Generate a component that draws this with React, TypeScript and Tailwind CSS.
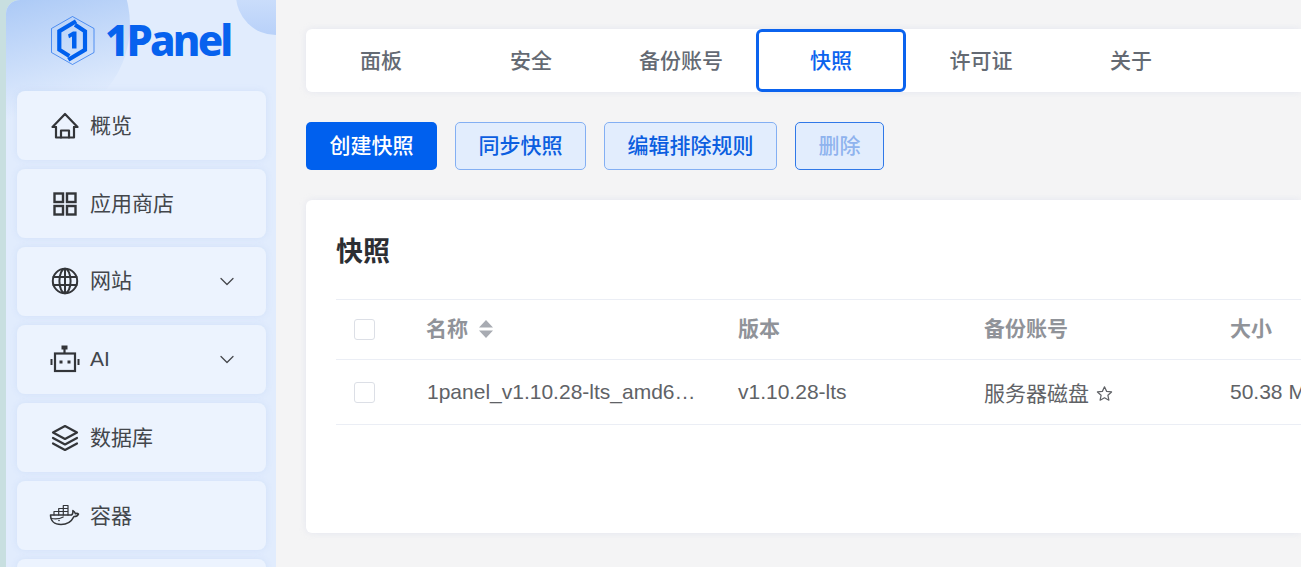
import React from "react";

const cjk = `"Liberation Sans","Noto Sans CJK SC",sans-serif`;

const stroke = { fill: "none", stroke: "#333539", strokeWidth: 2.2, strokeLinecap: "round" as const, strokeLinejoin: "round" as const };

function HomeIcon() {
  return (
    <svg width="28" height="28" viewBox="0 0 28 28" {...stroke}>
      <path d="M5 15H1.500L14 2l12.500 13H23" />
      <path d="M5 15v10.500h18V15" />
      <path d="M10 25.500V18.500h8v7" />
    </svg>
  );
}
function GridIcon() {
  return (
    <svg width="28" height="28" viewBox="0 0 28 28" fill="none" stroke="#333539" strokeWidth="2.4">
      <rect x="3.500" y="3.500" width="8.500" height="8.500" />
      <rect x="16" y="3.500" width="8.500" height="8.500" />
      <rect x="3.500" y="16" width="8.500" height="8.500" />
      <rect x="16" y="16" width="8.500" height="8.500" />
    </svg>
  );
}
function GlobeIcon() {
  return (
    <svg width="28" height="28" viewBox="0 0 28 28" fill="none" stroke="#333539" strokeWidth="2" strokeLinecap="round" strokeLinejoin="round">
      <circle cx="14" cy="14" r="12.200" />
      <ellipse cx="14" cy="14" rx="5.600" ry="12.200" />
      <path d="M14 2v24M2.400 10h23.200M2.400 18h23.200" />
    </svg>
  );
}
function BotIcon() {
  return (
    <svg width="30" height="30" viewBox="0 0 30 30" fill="none" stroke="#333539">
      <rect x="5" y="9.500" width="20" height="17.500" strokeWidth="2.200" />
      <path d="M14.500 5v4" strokeWidth="2.200" />
      <rect x="12" y="2" width="5" height="3" fill="#333539" strokeWidth="1" />
      <path d="M1.500 15v6M28.500 15v6" strokeWidth="2" />
      <rect x="9.500" y="16.500" width="3" height="3" fill="#333539" stroke="none" />
      <rect x="17.500" y="16.500" width="3" height="3" fill="#333539" stroke="none" />
    </svg>
  );
}
function LayersIcon() {
  return (
    <svg width="28" height="28" viewBox="0 0 28 28" {...stroke}>
      <path d="M14 2 26 8.500 14 15 2 8.500Z" />
      <path d="M2 14 14 20.500 26 14" />
      <path d="M2 19.500 14 26 26 19.500" />
    </svg>
  );
}
function DockerIcon() {
  return (
    <svg width="32" height="26" viewBox="0 0 32 26" fill="none" stroke="#333539" strokeWidth="1.500" strokeLinejoin="round" strokeLinecap="round">
      <path d="M1.500 12h21c1.300-.6 1.600-2 1.400-4.500 1.300.9 2.100 2 2.500 3.200 1.200-.5 2.400-.3 3.100.4-.9 1.800-2.600 2.600-4.600 2.500C22.500 18.500 18 21.500 12 21.500 5.500 21.500 1.500 18 1.500 12Z" />
      <path d="M5 12V8.500h14V12M9.700 12V8.500M14.300 12V8.500M9.700 8.500V5.500h9.300v3M14.300 5.500v3M14.300 5.500V2.500h4.700v3" strokeWidth="1.200" />
      <path d="M2.200 15.500c4 .8 8.500.5 12-1.500" strokeWidth="1.200" />
      <circle cx="10" cy="17.500" r=".8" fill="#333539" stroke="none" />
    </svg>
  );
}
function Chevron() {
  return (
    <svg width="16" height="10" viewBox="0 0 16 10" fill="none" stroke="#45474c" strokeWidth="1.300" strokeLinecap="round" strokeLinejoin="round" className="absolute left-[202px] top-[29px]">
      <path d="M2 2.500 8 8.500 14 2.500" />
    </svg>
  );
}

function Logo() {
  return (
    <div className="relative flex h-[91px] shrink-0 items-start pl-[34px] pt-[16px]">
      <svg width="44" height="50" viewBox="0 0 44 50" fill="none" className="shrink-0">
        <path d="M21.500 .5 43 12.500v24L21.500 48.500 .5 36.500v-24Z" stroke="#0b63ee" strokeWidth="0.800" opacity="0.8" />
        <path d="M25 5.300 8.300 15.300v18.400l10 6.300" stroke="#0060ee" strokeWidth="4.200" />
        <path d="M17.300 43.700 34 33.700V15.300L24 8.700" stroke="#0060ee" strokeWidth="4.200" />
        <path d="M17 18.500 22 15.500h3.500v17h-4.500V20.500l-3 1.800Z" fill="#0060ee" />
      </svg>
      <span className="ml-[10px] mt-[-6px] text-[42px] leading-[60px] font-extrabold tracking-[-2.800px] text-[#0762ee]" style={{ fontFamily: `"Noto Sans",sans-serif` }}>1Panel</span>
    </div>
  );
}

const menu: { label: string; icon: React.ReactNode; arrow?: boolean }[] = [
  { label: "概览", icon: <HomeIcon /> },
  { label: "应用商店", icon: <GridIcon /> },
  { label: "网站", icon: <GlobeIcon />, arrow: true },
  { label: "AI", icon: <BotIcon />, arrow: true },
  { label: "数据库", icon: <LayersIcon /> },
  { label: "容器", icon: <DockerIcon /> },
  { label: "", icon: null },
];

function Sidebar() {
  return (
    <div className="h-[567px] w-[276px] shrink-0 bg-[#c8dfe0] pl-[6px]">
      <div className="relative h-full overflow-hidden rounded-tl-[14px] bg-[#e1ecfd]">
        <div className="absolute left-[-76px] top-[-75px] h-[200px] w-[200px] rounded-full bg-[linear-gradient(165deg,#a3c4f5_30%,#e1ecfd_85%)]" />
        <div className="absolute right-[-40px] top-[-45px] h-[80px] w-[80px] rounded-full bg-gradient-to-b from-[#e1ecfd] to-[#b8d1f9]" />
        <div className="relative flex flex-col pl-[11px] pr-[10px]">
          <Logo />
          <div className="flex flex-col gap-[9px]">
            {menu.map((m, i) => (
              <div key={i} className={`relative flex h-[69px] shrink-0 items-center rounded-[8px] bg-[#ecf3fe] pl-[32px] shadow-[0_0_6px_rgba(190,210,245,0.45)] ${m.arrow ? "pb-[2px]" : ""}`}>
                {m.icon && <span className="flex w-[32px] shrink-0 items-center justify-center">{m.icon}</span>}
                {m.label && <span className="ml-[9px] text-[21px] leading-[30px] text-[#43464b]">{m.label}</span>}
                {m.arrow && <Chevron />}
              </div>
            ))}
          </div>
        </div>
      </div>
    </div>
  );
}

const tabs = ["面板", "安全", "备份账号", "快照", "许可证", "关于"];

function Tabs() {
  return (
    <div className="flex h-[63px] rounded-l-[6px] bg-white shadow-[0_0_6px_rgba(200,205,230,0.35)]">
      {tabs.map((t) => (
        <div
          key={t}
          className={
            t === "快照"
              ? "flex h-[63px] w-[150px] items-center justify-center rounded-[6px] border-[3px] border-[#0b63ee] text-[21px] font-medium text-[#0b63ee]"
              : "flex h-[63px] w-[150px] items-center justify-center text-[21px] font-medium text-[#646a73]"
          }
        >
          {t}
        </div>
      ))}
    </div>
  );
}

function Buttons() {
  return (
    <div className="mt-[30px] flex gap-[18px]">
      <button className="h-[48px] w-[131px] rounded-[5px] bg-[#0060ee] text-[21px] font-medium text-white">创建快照</button>
      <button className="h-[48px] w-[131px] rounded-[5px] border border-[#83aff3] bg-[#e2edfd] text-[21px] font-medium text-[#0b5ee0]">同步快照</button>
      <button className="h-[48px] w-[173px] rounded-[5px] border border-[#83aff3] bg-[#e2edfd] text-[21px] font-medium text-[#0b5ee0]">编辑排除规则</button>
      <button className="h-[48px] w-[89px] rounded-[5px] border border-[#2f78e8] bg-[#e2edfd] text-[21px] font-medium text-[#8fb3ee]">删除</button>
    </div>
  );
}

function Checkbox() {
  return <span className="block h-[21px] w-[21px] rounded-[3px] border border-[#dcdfe6] bg-white" />;
}

const cols = "grid grid-cols-[90px_312px_246px_246px_1fr] items-center";

function SnapshotTable() {
  return (
    <div className="mt-[30px] h-[333px] rounded-l-[6px] bg-white pl-[30px] shadow-[0_0_6px_rgba(200,205,230,0.35)]">
      <h2 className="flex h-[99px] items-center pt-[5px] text-[27px] font-bold text-[#2c2e33]">快照</h2>
      <div className="border-t border-[#ebeef5]">
        <div className={`${cols} h-[60px] border-b border-[#ebeef5] text-[21px] font-bold text-[#909399]`}>
          <div className="pl-[18px]"><Checkbox /></div>
          <div className="flex items-center pb-[2px]">
            名称
            <svg width="14" height="20" viewBox="0 0 14 20" className="ml-[11px]" fill="#a8abb2">
              <path d="M7 1 14 8.500H0ZM7 19 0 11.500H14Z" />
            </svg>
          </div>
          <div className="pb-[2px]">版本</div>
          <div className="pb-[2px]">备份账号</div>
          <div className="pb-[2px]">大小</div>
        </div>
        <div className={`${cols} h-[65px] border-b border-[#ebeef5] text-[21px] text-[#606266]`}>
          <div className="pl-[18px]"><Checkbox /></div>
          <div className="w-[270px] truncate pl-px">1panel_v1.10.28-lts_amd64.tar.gz</div>
          <div>v1.10.28-lts</div>
          <div className="flex items-center pt-[3px]">
            服务器磁盘
            <svg width="17" height="17" viewBox="0 0 24 24" fill="none" stroke="#606266" strokeWidth="1.700" strokeLinejoin="round" className="ml-[7px]">
              <path d="M12 2.500 15 9l7 .8-5.200 4.700 1.400 7L12 18l-6.200 3.500 1.400-7L2 9.800 9 9Z" />
            </svg>
          </div>
          <div className="whitespace-nowrap">50.38 MB</div>
        </div>
      </div>
    </div>
  );
}

export default function App() {
  return (
    <div className="flex h-[567px] w-[1301px] overflow-hidden bg-[#f4f4f5]" style={{ fontFamily: cjk }}>
      <Sidebar />
      <main className="min-w-0 flex-1 pl-[30px] pt-[29px]">
        <Tabs />
        <Buttons />
        <SnapshotTable />
      </main>
    </div>
  );
}
